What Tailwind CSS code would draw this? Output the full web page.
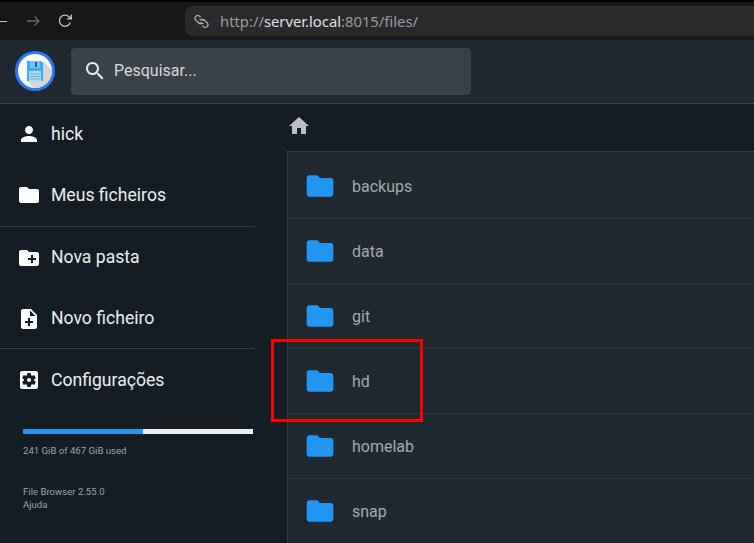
<!DOCTYPE html>
<html lang="pt">
<head>
<meta charset="utf-8">
<script src="https://cdn.jsdelivr.net/npm/@tailwindcss/browser@4"></script>
</head>
<body class="bg-[#141d24]">
<div class="relative w-[754px] h-[543px] overflow-hidden flex flex-col bg-[#141d24] font-['Roboto',sans-serif]">

  <!-- browser bar -->
  <div class="h-10 shrink-0 bg-[#17171a] border-t-2 border-black flex items-center">
    <div class="w-[7px] h-px bg-[#c4c4c4]"></div>
    <svg class="ml-[18px] w-[16px] h-[16px] text-[#6a6a6c]" viewBox="0 0 16 16" fill="none" stroke="currentColor" stroke-width="1.3"><path d="M2 8h12M9.500 3.500 14 8l-4.500 4.500"/></svg>
    <svg class="ml-[16px] w-[16px] h-[16px] text-[#c8c8c8]" viewBox="0 0 16 16" fill="none" stroke="currentColor" stroke-width="1.3"><path d="M13.300 9.500A5.600 5.600 0 1 1 12 3.800L14 5.600M14.300 1.500v4.400H10"/></svg>
    <div class="ml-[112px] flex-1 h-[30px] bg-[#2a2a2d] rounded-l-lg flex items-center pl-[9px] text-[14.8px] font-['Noto_Sans',sans-serif] text-[#9a9a9c]">
      <svg class="w-[15px] h-[15px] text-[#b0b0b2]" viewBox="0 0 16 16" fill="none" stroke="currentColor" stroke-width="1.400"><path d="M7 3.500 6 2.500a2.800 2.800 0 0 0-4 4l3 3a2.800 2.800 0 0 0 3 .5"/><path d="M9 12.500l1 1a2.800 2.800 0 0 0 4-4l-3-3a2.800 2.800 0 0 0-3-.5"/><path d="M6 6.500a2.800 2.800 0 0 1 4 .5M10 9.500a2.800 2.800 0 0 1-4-.5"/></svg>
      <span class="ml-[11px] whitespace-nowrap">http://<span class="text-[#e0e0e0]">server.local</span>:8015/files/</span>
    </div>
  </div>

  <!-- header -->
  <header class="h-[64px] shrink-0 bg-[#20292f] border-b border-[#3a4249] flex items-center pl-[15px]">
    <svg class="w-10 h-10 shrink-0 -mt-[1px]" viewBox="0 0 40 40">
      <circle cx="20" cy="20" r="20" fill="#2979ff"/>
      <circle cx="20" cy="20" r="17" fill="#fafafa"/>
      <path d="M28 10 37 19A17 17 0 0 1 19 37L12 30Z" fill="#d6d6d6"/>
      <path d="M12 10h14L28 12V30H12Z" fill="#3fa9f5"/>
      <rect x="15" y="10" width="10" height="7" fill="#6cc6f8"/>
      <rect x="20" y="11" width="2" height="5" fill="#1d5f8a"/>
      <rect x="14" y="20" width="12" height="10" fill="#a6dcf8"/>
      <path d="M15 23h10M15 25.500h10M15 28h10" stroke="#5fa8d3" stroke-width="0.800"/>
    </svg>
    <div class="ml-4 w-[400px] h-[47px] bg-[#3a4249] rounded-[4px] flex items-center pl-[12px] -mt-[1px]">
      <svg class="w-6 h-6 text-[#e8e8e8]" viewBox="0 0 24 24" fill="currentColor"><path d="M15.500 14h-.79l-.28-.27C15.410 12.590 16 11.110 16 9.500 16 5.910 13.090 3 9.500 3S3 5.910 3 9.500 5.910 16 9.500 16c1.610 0 3.090-.59 4.230-1.570l.27.28v.79l5 4.990L20.490 19l-4.990-5zm-6 0C7.010 14 5 11.990 5 9.500S7.010 5 9.500 5 14 7.010 14 9.500 11.990 14 9.500 14z"/></svg>
      <span class="ml-[7px] text-base text-[#d8dadc]">Pesquisar...</span>
    </div>
  </header>

  <div class="flex flex-1 min-h-0">
    <!-- sidebar -->
    <aside class="w-[287px] shrink-0 text-[#eceeef]">
      <div class="w-[255px] text-[17.6px]">
        <div class="h-[60px] flex items-center pl-[17px] gap-[10px]">
          <svg class="w-6 h-6 text-white" viewBox="0 0 24 24" fill="currentColor"><path d="M12 12c2.210 0 4-1.790 4-4s-1.790-4-4-4-4 1.790-4 4 1.790 4 4 4zm0 2c-2.670 0-8 1.340-8 4v2h16v-2c0-2.660-5.330-4-8-4z"/></svg>
          <span>hick</span>
        </div>
        <div class="h-[63px] flex items-center pl-[17px] gap-[10px] border-b border-[#333b42]">
          <svg class="w-6 h-6 text-white" viewBox="0 0 24 24" fill="currentColor"><path d="M10 4H4c-1.100 0-1.990.9-1.990 2L2 18c0 1.100.9 2 2 2h16c1.100 0 2-.9 2-2V8c0-1.100-.9-2-2-2h-8l-2-2z"/></svg>
          <span>Meus ficheiros</span>
        </div>
        <div class="h-[61px] flex items-center pl-[17px] gap-[10px]">
          <svg class="w-6 h-6 text-white" viewBox="0 0 24 24" fill="currentColor"><path d="M20 6h-8l-2-2H4c-1.110 0-1.990.89-1.990 2L2 18c0 1.110.89 2 2 2h16c1.110 0 2-.89 2-2V8c0-1.110-.89-2-2-2zm-1 8h-3v3h-2v-3h-3v-2h3V9h2v3h3v2z"/></svg>
          <span>Nova pasta</span>
        </div>
        <div class="h-[61px] pt-px flex items-center pl-[17px] gap-[10px] border-b border-[#333b42]">
          <svg class="w-6 h-6 text-white" viewBox="0 0 24 24" fill="currentColor"><path d="M14 2H6c-1.100 0-1.990.9-1.990 2L4 20c0 1.100.89 2 1.990 2H18c1.100 0 2-.9 2-2V8l-6-6zm2 14h-3v3h-2v-3H8v-2h3v-3h2v3h3v2zm-3-7V3.500L18.500 9H13z"/></svg>
          <span>Novo ficheiro</span>
        </div>
        <div class="h-[61px] pt-px flex items-center pl-[17px] gap-[10px]">
          <svg class="w-6 h-6 text-white" viewBox="0 0 24 24" fill="currentColor"><path d="M12 10c-1.100 0-2 .9-2 2s.9 2 2 2 2-.9 2-2-.9-2-2-2zm7-7H5c-1.110 0-2 .9-2 2v14c0 1.100.89 2 2 2h14c1.110 0 2-.9 2-2V5c0-1.100-.89-2-2-2zm-1.750 9c0 .23-.02.46-.05.68l1.480 1.160c.13.11.17.3.08.45l-1.400 2.420c-.09.15-.27.21-.43.15l-1.740-.7c-.36.28-.76.51-1.180.69l-.26 1.850c-.03.17-.18.3-.35.3h-2.800c-.17 0-.32-.13-.35-.29l-.26-1.850c-.43-.18-.82-.41-1.180-.69l-1.740.7c-.16.06-.34 0-.43-.15l-1.400-2.420c-.09-.15-.05-.34.08-.45l1.480-1.160c-.03-.23-.05-.46-.05-.69 0-.23.02-.46.05-.68l-1.480-1.160c-.13-.11-.17-.3-.08-.45l1.400-2.420c.09-.15.27-.21.43-.15l1.740.7c.36-.28.76-.51 1.180-.69l.26-1.850c.03-.17.18-.3.35-.3h2.800c.17 0 .32.13.35.29l.26 1.850c.43.18.82.41 1.180.69l1.740-.7c.16-.06.34 0 .43.15l1.400 2.420c.09.15.05.34-.08.45l-1.480 1.160c.03.23.05.46.05.69z"/></svg>
          <span>Configurações</span>
        </div>
      </div>
      <div class="ml-[23px] mt-[19px] w-[230px]">
        <div class="h-[5px] flex bg-[#eeeeee]"><div class="w-[120px] bg-[#2196f3]"></div></div>
        <p class="mt-[11px] text-[9.6px] leading-[12px] text-[#9ea3a7] whitespace-nowrap">241 GiB of 467 GiB used</p>
        <div class="mt-[28px] text-[9.6px] leading-[14px] text-[#9ea3a7]">
          <p>File Browser 2.55.0</p>
          <p class="-mt-px">Ajuda</p>
        </div>
      </div>
    </aside>

    <!-- main -->
    <main class="flex-1 min-w-0 flex flex-col">
      <div class="h-[47px] shrink-0 flex items-center pb-1">
        <svg class="w-6 h-6 text-[#bcc0c4]" viewBox="0 0 24 24" fill="currentColor"><path d="M10 20v-6h4v6h5v-8h3L12 3 2 12h3v8z"/></svg>
      </div>
      <div class="flex-1 bg-[#20292f] border-t border-l border-[#333b42] pt-[2px] text-[#a5a9ad] text-base">
        <div class="h-[65px] flex items-center pl-[16px] border-b border-[#2e363d]">
          <svg class="w-8 h-8 text-[#2196f3]" viewBox="0 0 24 24" fill="currentColor"><path d="M10 4H4c-1.100 0-1.990.9-1.990 2L2 18c0 1.100.9 2 2 2h16c1.100 0 2-.9 2-2V8c0-1.100-.9-2-2-2h-8l-2-2z"/></svg>
          <span class="ml-[16px] mt-[2px]">backups</span>
        </div>
        <div class="h-[65px] flex items-center pl-[16px] border-b border-[#2e363d]">
          <svg class="w-8 h-8 text-[#2196f3]" viewBox="0 0 24 24" fill="currentColor"><path d="M10 4H4c-1.100 0-1.990.9-1.990 2L2 18c0 1.100.9 2 2 2h16c1.100 0 2-.9 2-2V8c0-1.100-.9-2-2-2h-8l-2-2z"/></svg>
          <span class="ml-[16px] mt-[2px]">data</span>
        </div>
        <div class="h-[65px] flex items-center pl-[16px] border-b border-[#2e363d]">
          <svg class="w-8 h-8 text-[#2196f3]" viewBox="0 0 24 24" fill="currentColor"><path d="M10 4H4c-1.100 0-1.990.9-1.990 2L2 18c0 1.100.9 2 2 2h16c1.100 0 2-.9 2-2V8c0-1.100-.9-2-2-2h-8l-2-2z"/></svg>
          <span class="ml-[16px] mt-[2px]">git</span>
        </div>
        <div class="h-[65px] flex items-center pl-[16px] border-b border-[#2e363d]">
          <svg class="w-8 h-8 text-[#2196f3]" viewBox="0 0 24 24" fill="currentColor"><path d="M10 4H4c-1.100 0-1.990.9-1.990 2L2 18c0 1.100.9 2 2 2h16c1.100 0 2-.9 2-2V8c0-1.100-.9-2-2-2h-8l-2-2z"/></svg>
          <span class="ml-[16px] mt-[2px]">hd</span>
        </div>
        <div class="h-[65px] flex items-center pl-[16px] border-b border-[#2e363d]">
          <svg class="w-8 h-8 text-[#2196f3]" viewBox="0 0 24 24" fill="currentColor"><path d="M10 4H4c-1.100 0-1.990.9-1.990 2L2 18c0 1.100.9 2 2 2h16c1.100 0 2-.9 2-2V8c0-1.100-.9-2-2-2h-8l-2-2z"/></svg>
          <span class="ml-[16px] mt-[2px]">homelab</span>
        </div>
        <div class="h-[65px] flex items-center pl-[16px] border-b border-[#2e363d]">
          <svg class="w-8 h-8 text-[#2196f3]" viewBox="0 0 24 24" fill="currentColor"><path d="M10 4H4c-1.100 0-1.990.9-1.990 2L2 18c0 1.100.9 2 2 2h16c1.100 0 2-.9 2-2V8c0-1.100-.9-2-2-2h-8l-2-2z"/></svg>
          <span class="ml-[16px] mt-[2px]">snap</span>
        </div>
      </div>
    </main>
  </div>

  <!-- red highlight annotation -->
  <div class="absolute left-[271px] top-[339px] w-[152px] h-[83px] border-[3px] border-[#ff0000]"></div>
</div>
</body>
</html>
